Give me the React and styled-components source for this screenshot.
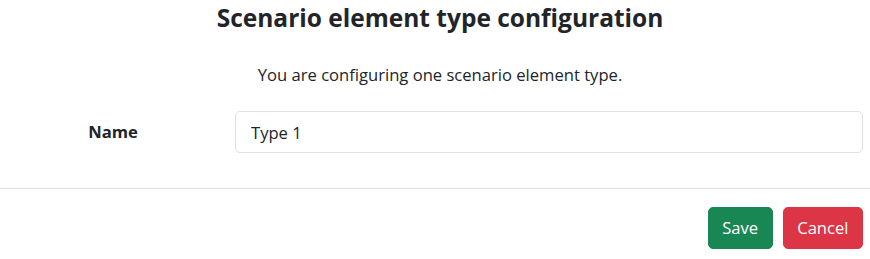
import React from "react";
import styled, { createGlobalStyle } from "styled-components";

const Global = createGlobalStyle`
  html, body { margin: 0; padding: 0; background: #fff; }
  body {
    font-family: "Open Sans", "Noto Sans", "Liberation Sans", sans-serif;
    color: #212529;
    font-size: 16.6px;
    line-height: 26px;
  }
  * { box-sizing: border-box; }
`;

const Page = styled.div`
  width: 870px;
  height: 259px;
  display: flex;
  flex-direction: column;
`;

const Intro = styled.div`
  padding: 2px 0 0 10px;
  text-align: center;
`;

const Title = styled.h4`
  margin: 0;
  font-size: 24.5px;
  line-height: 32px;
  font-weight: 700;
`;

const Lead = styled.p`
  margin: 28px 0 0;
`;

const FormRow = styled.div`
  margin-top: 23px;
  display: grid;
  grid-template-columns: 226px 1fr;
  column-gap: 9px;
  align-items: center;
  padding-right: 7px;
`;

const Label = styled.label`
  text-align: center;
  font-weight: 700;
`;

const Input = styled.input`
  display: block;
  height: 42px;
  width: 100%;
  padding: 0 15px;
  font: inherit;
  color: #212529;
  border: 1px solid #dee2e6;
  border-radius: 5px;
  outline: none;
`;

const Divider = styled.hr`
  margin: 35px 0 0;
  border: 0;
  border-top: 1px solid #dee2e6;
`;

const Footer = styled.div`
  display: flex;
  justify-content: flex-end;
  gap: 10px;
  padding: 18px 7px 0 0;
`;

const Button = styled.button`
  height: 42px;
  padding: 0 13.5px;
  font: inherit;
  color: #fff;
  border: 1px solid ${(p) => p.$bg};
  background: ${(p) => p.$bg};
  border-radius: 5px;
`;

export default function App() {
  return (
    <>
      <Global />
      <Page>
        <Intro>
          <Title>Scenario element type configuration</Title>
          <Lead>You are configuring one scenario element type.</Lead>
        </Intro>
        <FormRow>
          <Label htmlFor="name">Name</Label>
          <Input id="name" defaultValue="Type 1" />
        </FormRow>
        <Divider />
        <Footer>
          <Button $bg="#198754">Save</Button>
          <Button $bg="#dc3545">Cancel</Button>
        </Footer>
      </Page>
    </>
  );
}
